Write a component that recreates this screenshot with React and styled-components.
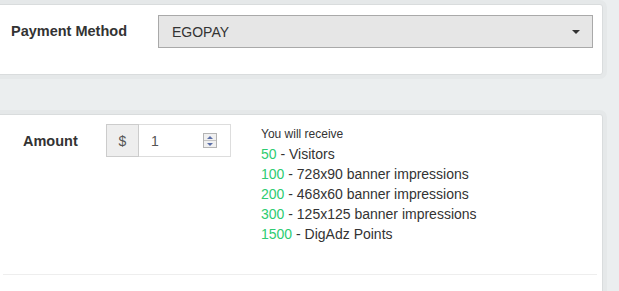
import React from 'react';
import styled, { createGlobalStyle } from 'styled-components';

const Global = createGlobalStyle`
  html, body {
    margin: 0;
    padding: 0;
    background: #ebeeef;
    font-family: "Liberation Sans", Arial, sans-serif;
    color: #333;
    overflow: hidden;
  }
`;

const Page = styled.div`
  padding: 4px 16px 0 0;
  display: flex;
  flex-direction: column;
  gap: 39px;
`;

const Card = styled.div`
  margin-left: -5px;
  background: #fff;
  border: 1px solid #d9dcdd;
  border-radius: 3px;
  box-shadow: 0 0 0 4px rgba(0, 0, 0, 0.025);
  padding: ${(p) => p.$pad || '10px 9px 26px 15px'};
`;

const Row = styled.div`
  display: flex;
  align-items: flex-start;
`;

const Label = styled.label`
  flex: 0 0 ${(p) => p.$width}px;
  box-sizing: border-box;
  padding-left: ${(p) => p.$indent || 0}px;
  padding-top: ${(p) => p.$top}px;
  font-size: 14.5px;
  line-height: 20px;
  font-weight: bold;
  color: #333;
`;

const SelectWrap = styled.div`
  flex: 1;
  position: relative;
  &::after {
    content: '';
    position: absolute;
    right: 13px;
    top: 15px;
    border-left: 4px solid transparent;
    border-right: 4px solid transparent;
    border-top: 4px solid #333;
    pointer-events: none;
  }
`;

const Select = styled.select`
  appearance: none;
  width: 100%;
  height: 33px;
  box-sizing: border-box;
  margin: 0;
  padding: 0 30px 0 13px;
  background: #e6e6e6;
  border: 1px solid #a9a9a9;
  border-radius: 0;
  font-family: inherit;
  font-size: 14px;
  color: #333;
  outline: none;
`;

const InputGroup = styled.div`
  display: flex;
  width: 125px;
  height: 33px;
  flex: 0 0 125px;
`;

const Addon = styled.span`
  flex: 0 0 33px;
  box-sizing: border-box;
  display: flex;
  align-items: center;
  justify-content: center;
  background: #eee;
  border: 1px solid #ccc;
  font-size: 14px;
  color: #555;
`;

const InputBox = styled.div`
  flex: 1;
  min-width: 0;
  display: flex;
  align-items: center;
  border: 1px solid #ddd;
  border-left: none;
  padding: 0 13px 0 12px;
`;

const NumberInput = styled.input`
  flex: 1;
  width: 0;
  min-width: 0;
  border: none;
  outline: none;
  padding: 0;
  font-family: inherit;
  font-size: 14px;
  color: #555;
  background: transparent;
`;

const Spinner = styled.div`
  flex: 0 0 14px;
  height: 15px;
  box-sizing: border-box;
  border: 1px solid #b4b4b4;
  display: flex;
  flex-direction: column;
  background: #f0f0f0;
`;

const SpinHalf = styled.span`
  flex: 1;
  display: flex;
  align-items: center;
  justify-content: center;
  border-top: ${(p) => (p.$down ? '1px solid #c4c4c4' : 'none')};
  &::before {
    content: '';
    border-left: 3px solid transparent;
    border-right: 3px solid transparent;
    ${(p) =>
      p.$down ? 'border-top: 3px solid #5b6fa8;' : 'border-bottom: 3px solid #5b6fa8;'}
  }
`;

const Receive = styled.div`
  margin-left: 30px;
  font-size: 14px;
  line-height: 20px;
  color: #333;
`;

const Caption = styled.div`
  font-size: 12px;
`;

const Num = styled.span`
  color: #2ecc71;
`;

const Divider = styled.hr`
  margin: 30px -5px 0 -8px;
  border: none;
  border-top: 1px solid #eee;
`;

const rewards = [
  ['50', 'Visitors'],
  ['100', '728x90 banner impressions'],
  ['200', '468x60 banner impressions'],
  ['300', '125x125 banner impressions'],
  ['1500', 'DigAdz Points'],
];

export default function App() {
  return (
    <>
      <Global />
      <Page>
        <Card>
          <Row>
            <Label $width={147} $top={6}>
              Payment Method
            </Label>
            <SelectWrap>
              <Select defaultValue="EGOPAY">
                <option>EGOPAY</option>
                <option>PAYPAL</option>
                <option>PERFECTMONEY</option>
              </Select>
            </SelectWrap>
          </Row>
        </Card>
        <Card $pad="9px 10px 60px 15px">
          <Row>
            <Label $width={95} $indent={12} $top={7}>
              Amount
            </Label>
            <InputGroup>
              <Addon>$</Addon>
              <InputBox>
                <NumberInput type="text" defaultValue="1" />
                <Spinner>
                  <SpinHalf />
                  <SpinHalf $down />
                </Spinner>
              </InputBox>
            </InputGroup>
            <Receive>
              <Caption>You will receive</Caption>
              {rewards.map(([n, what]) => (
                <div key={n}>
                  <Num>{n}</Num> - {what}
                </div>
              ))}
            </Receive>
          </Row>
          <Divider />
        </Card>
      </Page>
    </>
  );
}
